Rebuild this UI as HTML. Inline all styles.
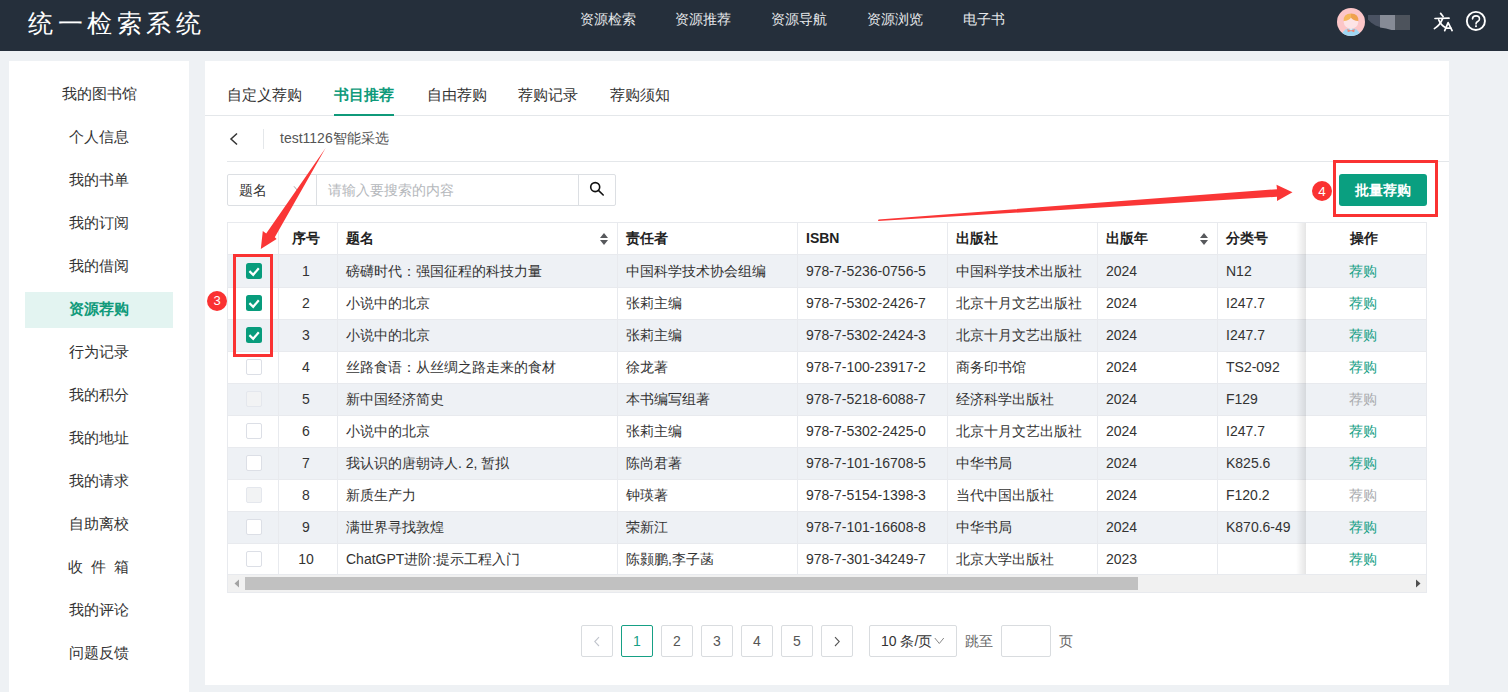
<!DOCTYPE html>
<html><head><meta charset="utf-8">
<style>
*{margin:0;padding:0;box-sizing:border-box}
html,body{width:1508px;height:692px;overflow:hidden;background:#eef1f4;font-family:"Liberation Sans",sans-serif;color:#333}
.abs{position:absolute}
#hdr{position:absolute;left:0;top:0;width:1508px;height:51px;background:#252f3b}
#title{position:absolute;left:28px;top:8px;font-size:25px;letter-spacing:4.6px;color:#fff;font-weight:500;line-height:30px;white-space:nowrap}
.nav{position:absolute;top:11px;font-size:14px;color:#e6e8ea;line-height:16px;white-space:nowrap}
#side{position:absolute;left:9px;top:61px;width:180px;height:640px;background:#fff}
.si{position:absolute;left:0;width:180px;text-align:center;font-size:15px;line-height:20px;color:#333;white-space:nowrap}
#sact{position:absolute;left:16px;top:231px;width:148px;height:36px;background:#e3f4f1}
#main{position:absolute;left:205px;top:61px;width:1244px;height:624px;background:#fff}
.tab{position:absolute;top:24px;font-size:15px;line-height:20px;color:#333;white-space:nowrap}
.line{position:absolute;height:1px;background:#e4e7ea}
.hl{height:1px;background:#e8eaee}
.vl{width:1px;background:#e8eaee}
.th{font-size:14px;line-height:16px;font-weight:bold;color:#222;white-space:nowrap}
.td{font-size:14px;line-height:16px;color:#333;white-space:nowrap}
.pg{position:absolute;top:625px;width:32px;height:32px;border:1px solid #d9dcdf;border-radius:2px;background:#fff;font-size:14px;line-height:30px;text-align:center;color:#555}
</style></head><body>
<div id="hdr">
  <div id="title">统一检索系统</div>
  <div class="nav" style="left:580px">资源检索</div>
  <div class="nav" style="left:675px">资源推荐</div>
  <div class="nav" style="left:771px">资源导航</div>
  <div class="nav" style="left:867px">资源浏览</div>
  <div class="nav" style="left:963px">电子书</div>
  <!-- avatar -->
  <svg class="abs" style="left:1337px;top:8px" width="28" height="28" viewBox="0 0 28 28">
    <defs><clipPath id="cc"><circle cx="14" cy="14" r="14"/></clipPath></defs>
    <circle cx="14" cy="14" r="14" fill="#fcc6c8"/>
    <g clip-path="url(#cc)">
      <path d="M4.5 28 Q5.5 22 11 20.5 H17 Q22.5 22 23.5 28Z" fill="#9fd7f3"/>
      <path d="M12.5 20.5 H15.5 L14 22Z" fill="#fff"/>
      <path d="M10.2 21 L14 22.6 L17.8 21 L17.2 24.2 L14 23 L10.8 24.2Z" fill="#f38472"/>
      <ellipse cx="14" cy="14.2" rx="7.2" ry="6.4" fill="#fde4e6"/>
      <path d="M6.6 13 Q6.2 5.6 14 5.4 L14 9.8 Q12 12.8 6.6 13Z" fill="#f5b75c"/>
      <path d="M21.4 13 Q21.8 5.6 14 5.4 L14 9.8 Q16 12.8 21.4 13Z" fill="#efa24f"/>
    </g>
  </svg>
  <svg class="abs" style="left:0;top:0" width="1508" height="51" viewBox="0 0 1508 51">
    <path d="M1368 15 H1380 V27 L1375.5 25.5 L1371 22.5 L1368 19.5Z" fill="#4a5262"/>
    <path d="M1380 15 H1395 V30 H1391.5 L1386 28.5 L1380 27.5Z" fill="#868b96"/>
    <rect x="1395" y="15" width="15" height="15" fill="#4d535c"/>
  </svg>
  <!-- translate icon -->
  <svg class="abs" style="left:1420px;top:0" width="40" height="40" viewBox="1420 0 40 40">
    <g stroke="#fff" stroke-width="1.7" fill="none" stroke-linecap="round" stroke-linejoin="round">
      <path d="M1440.6 13.4L1443.1 16.5"/><path d="M1435 18.5L1449 18.2"/>
      <path d="M1442.6 18.6Q1440.2 25 1434.4 28.6"/><path d="M1438.7 19.9Q1441.2 25.6 1445.4 27.6"/>
      <path d="M1444.7 30.6L1448.1 22.6L1452.1 30.6"/><path d="M1446 28.1H1450.8"/>
    </g>
  </svg>
  <!-- help icon -->
  <svg class="abs" style="left:1465px;top:10px" width="22" height="22" viewBox="0 0 22 22">
    <circle cx="10.9" cy="10.9" r="9.05" stroke="#fff" stroke-width="1.9" fill="none"/>
    <path d="M7.5 8.9Q7.6 5.9 11 5.9Q14.5 5.9 14.5 8.9Q14.5 10.5 12.7 11.5Q11 12.4 11 13.9" stroke="#fff" stroke-width="1.6" fill="none" stroke-linecap="round"/>
    <rect x="10.1" y="15.3" width="1.8" height="1.8" fill="#fff"/>
  </svg>
</div>

<div id="side">
  <div id="sact"></div>
  <div class="si" style="top:23px">我的图书馆</div>
  <div class="si" style="top:66px">个人信息</div>
  <div class="si" style="top:109px">我的书单</div>
  <div class="si" style="top:152px">我的订阅</div>
  <div class="si" style="top:195px">我的借阅</div>
  <div class="si" style="top:238px;color:#0f9a7a;font-weight:bold">资源荐购</div>
  <div class="si" style="top:281px">行为记录</div>
  <div class="si" style="top:324px">我的积分</div>
  <div class="si" style="top:367px">我的地址</div>
  <div class="si" style="top:410px">我的请求</div>
  <div class="si" style="top:453px">自助离校</div>
  <div class="si" style="top:496px;left:59px;width:15px">收</div><div class="si" style="top:496px;left:81.5px;width:15px">件</div><div class="si" style="top:496px;left:104.5px;width:15px">箱</div>
  <div class="si" style="top:539px">我的评论</div>
  <div class="si" style="top:582px">问题反馈</div>
</div>

<div id="main">
  <div class="tab" style="left:22px">自定义荐购</div>
  <div class="tab" style="left:129px;color:#0f9a7a;font-weight:bold">书目推荐</div>
  <div class="tab" style="left:222px">自由荐购</div>
  <div class="tab" style="left:313px">荐购记录</div>
  <div class="tab" style="left:405px">荐购须知</div>
  <div class="line" style="left:0;top:54px;width:1244px"></div>
  <div class="abs" style="left:129px;top:53px;width:60px;height:2px;background:#0f9a7a"></div>
  <!-- breadcrumb -->
  <svg class="abs" style="left:23px;top:71px" width="12" height="14" viewBox="0 0 12 14"><path d="M9 1.5L3 7L9 12.5" stroke="#333" stroke-width="1.5" fill="none"/></svg>
  <div class="abs" style="left:58px;top:68px;width:1px;height:20px;background:#e4e7ea"></div>
  <div class="abs" style="left:75px;top:69px;font-size:14px;line-height:16px;color:#555;white-space:nowrap">test1126智能采选</div>
  <div class="line" style="left:22px;top:100px;width:1222px"></div>
  <!-- search -->
  <div class="abs" style="left:22px;top:113px;width:389px;height:32px;border:1px solid #dcdfe3;border-radius:2px"></div>
  <div class="abs" style="left:111px;top:114px;width:1px;height:30px;background:#dcdfe3"></div>
  <div class="abs" style="left:373px;top:114px;width:1px;height:30px;background:#dcdfe3"></div>
  <div class="abs" style="left:34px;top:121px;font-size:14px;line-height:16px;color:#333">题名</div>
  <svg class="abs" style="left:88px;top:124px" width="9" height="7" viewBox="0 0 9 7"><path d="M1 1.3L4.5 5.5L8 1.3" stroke="#aaa" stroke-width="1" fill="none"/></svg>
  <div class="abs" style="left:123px;top:121px;font-size:14px;line-height:16px;color:#b5b8bc;white-space:nowrap">请输入要搜索的内容</div>
  <svg class="abs" style="left:384px;top:120px" width="17" height="17" viewBox="0 0 17 17"><circle cx="6.2" cy="6.1" r="4.5" stroke="#111" stroke-width="1.6" fill="none"/><path d="M9.4 9.4L14.2 14" stroke="#111" stroke-width="1.6" stroke-linecap="round"/></svg>
  <!-- batch button -->
  <div class="abs" style="left:1134px;top:113px;width:88px;height:32px;background:#0a9f80;border-radius:3px;color:#fff;font-size:14px;font-weight:bold;line-height:32px;text-align:center">批量荐购</div>
</div>

<div class="abs" style="left:227px;top:222px;width:1200px;height:371px;border:1px solid #e8eaee;background:#fff"></div>
<div class="abs" style="left:228px;top:255px;width:1198px;height:32px;background:#eef1f5"></div>
<div class="abs hl" style="left:228px;top:287px;width:1198px"></div>
<div class="abs" style="left:228px;top:288px;width:1198px;height:31px;background:#fff"></div>
<div class="abs hl" style="left:228px;top:319px;width:1198px"></div>
<div class="abs" style="left:228px;top:320px;width:1198px;height:31px;background:#eef1f5"></div>
<div class="abs hl" style="left:228px;top:351px;width:1198px"></div>
<div class="abs" style="left:228px;top:352px;width:1198px;height:31px;background:#fff"></div>
<div class="abs hl" style="left:228px;top:383px;width:1198px"></div>
<div class="abs" style="left:228px;top:384px;width:1198px;height:31px;background:#eef1f5"></div>
<div class="abs hl" style="left:228px;top:415px;width:1198px"></div>
<div class="abs" style="left:228px;top:416px;width:1198px;height:31px;background:#fff"></div>
<div class="abs hl" style="left:228px;top:447px;width:1198px"></div>
<div class="abs" style="left:228px;top:448px;width:1198px;height:31px;background:#eef1f5"></div>
<div class="abs hl" style="left:228px;top:479px;width:1198px"></div>
<div class="abs" style="left:228px;top:480px;width:1198px;height:31px;background:#fff"></div>
<div class="abs hl" style="left:228px;top:511px;width:1198px"></div>
<div class="abs" style="left:228px;top:512px;width:1198px;height:31px;background:#eef1f5"></div>
<div class="abs hl" style="left:228px;top:543px;width:1198px"></div>
<div class="abs" style="left:228px;top:544px;width:1198px;height:31px;background:#fff"></div>
<div class="abs hl" style="left:228px;top:575px;width:1198px"></div>
<div class="abs hl" style="left:228px;top:254px;width:1198px"></div>
<div class="abs vl" style="left:278px;top:223px;height:352px"></div>
<div class="abs vl" style="left:337px;top:223px;height:352px"></div>
<div class="abs vl" style="left:617px;top:223px;height:352px"></div>
<div class="abs vl" style="left:797px;top:223px;height:352px"></div>
<div class="abs vl" style="left:947px;top:223px;height:352px"></div>
<div class="abs vl" style="left:1097px;top:223px;height:352px"></div>
<div class="abs vl" style="left:1217px;top:223px;height:352px"></div>
<div class="abs th" style="left:292px;top:230px">序号</div>
<div class="abs th" style="left:346px;top:230px">题名</div>
<div class="abs th" style="left:626px;top:230px">责任者</div>
<div class="abs th" style="left:806px;top:230px">ISBN</div>
<div class="abs th" style="left:956px;top:230px">出版社</div>
<div class="abs th" style="left:1106px;top:230px">出版年</div>
<div class="abs th" style="left:1226px;top:230px">分类号</div>
<svg class="abs" style="left:600px;top:233px" width="8" height="12" viewBox="0 0 8 12"><path d="M4 0L8 5H0Z M0 7H8L4 12Z" fill="#57595c"/></svg>
<svg class="abs" style="left:1200px;top:233px" width="8" height="12" viewBox="0 0 8 12"><path d="M4 0L8 5H0Z M0 7H8L4 12Z" fill="#57595c"/></svg>
<div class="abs td" style="left:277px;width:58px;text-align:center;top:263px">1</div>
<div class="abs td" style="left:346px;top:263px">磅礴时代：强国征程的科技力量</div>
<div class="abs td" style="left:626px;top:263px">中国科学技术协会组编</div>
<div class="abs td" style="left:806px;top:263px">978-7-5236-0756-5</div>
<div class="abs td" style="left:956px;top:263px">中国科学技术出版社</div>
<div class="abs td" style="left:1106px;top:263px">2024</div>
<div class="abs td" style="left:1226px;top:263px">N12</div>
<svg class="abs" style="left:246px;top:263px" width="16" height="16" viewBox="0 0 16 16"><rect x="0" y="0" width="16" height="16" rx="2.5" fill="#089c7c"/><path d="M3.4 8.1L7.2 11.8L12.8 5.3" stroke="#fff" stroke-width="2.2" fill="none"/></svg>
<div class="abs td" style="left:277px;width:58px;text-align:center;top:295px">2</div>
<div class="abs td" style="left:346px;top:295px">小说中的北京</div>
<div class="abs td" style="left:626px;top:295px">张莉主编</div>
<div class="abs td" style="left:806px;top:295px">978-7-5302-2426-7</div>
<div class="abs td" style="left:956px;top:295px">北京十月文艺出版社</div>
<div class="abs td" style="left:1106px;top:295px">2024</div>
<div class="abs td" style="left:1226px;top:295px">I247.7</div>
<svg class="abs" style="left:246px;top:295px" width="16" height="16" viewBox="0 0 16 16"><rect x="0" y="0" width="16" height="16" rx="2.5" fill="#089c7c"/><path d="M3.4 8.1L7.2 11.8L12.8 5.3" stroke="#fff" stroke-width="2.2" fill="none"/></svg>
<div class="abs td" style="left:277px;width:58px;text-align:center;top:327px">3</div>
<div class="abs td" style="left:346px;top:327px">小说中的北京</div>
<div class="abs td" style="left:626px;top:327px">张莉主编</div>
<div class="abs td" style="left:806px;top:327px">978-7-5302-2424-3</div>
<div class="abs td" style="left:956px;top:327px">北京十月文艺出版社</div>
<div class="abs td" style="left:1106px;top:327px">2024</div>
<div class="abs td" style="left:1226px;top:327px">I247.7</div>
<svg class="abs" style="left:246px;top:327px" width="16" height="16" viewBox="0 0 16 16"><rect x="0" y="0" width="16" height="16" rx="2.5" fill="#089c7c"/><path d="M3.4 8.1L7.2 11.8L12.8 5.3" stroke="#fff" stroke-width="2.2" fill="none"/></svg>
<div class="abs td" style="left:277px;width:58px;text-align:center;top:359px">4</div>
<div class="abs td" style="left:346px;top:359px">丝路食语：从丝绸之路走来的食材</div>
<div class="abs td" style="left:626px;top:359px">徐龙著</div>
<div class="abs td" style="left:806px;top:359px">978-7-100-23917-2</div>
<div class="abs td" style="left:956px;top:359px">商务印书馆</div>
<div class="abs td" style="left:1106px;top:359px">2024</div>
<div class="abs td" style="left:1226px;top:359px">TS2-092</div>
<div class="abs" style="left:246px;top:359px;width:16px;height:16px;border:1px solid #dcdfe6;border-radius:2px;background:#fff"></div>
<div class="abs td" style="left:277px;width:58px;text-align:center;top:391px">5</div>
<div class="abs td" style="left:346px;top:391px">新中国经济简史</div>
<div class="abs td" style="left:626px;top:391px">本书编写组著</div>
<div class="abs td" style="left:806px;top:391px">978-7-5218-6088-7</div>
<div class="abs td" style="left:956px;top:391px">经济科学出版社</div>
<div class="abs td" style="left:1106px;top:391px">2024</div>
<div class="abs td" style="left:1226px;top:391px">F129</div>
<div class="abs" style="left:246px;top:391px;width:16px;height:16px;border:1px solid #e4e7ed;border-radius:2px;background:#f2f3f4"></div>
<div class="abs td" style="left:277px;width:58px;text-align:center;top:423px">6</div>
<div class="abs td" style="left:346px;top:423px">小说中的北京</div>
<div class="abs td" style="left:626px;top:423px">张莉主编</div>
<div class="abs td" style="left:806px;top:423px">978-7-5302-2425-0</div>
<div class="abs td" style="left:956px;top:423px">北京十月文艺出版社</div>
<div class="abs td" style="left:1106px;top:423px">2024</div>
<div class="abs td" style="left:1226px;top:423px">I247.7</div>
<div class="abs" style="left:246px;top:423px;width:16px;height:16px;border:1px solid #dcdfe6;border-radius:2px;background:#fff"></div>
<div class="abs td" style="left:277px;width:58px;text-align:center;top:455px">7</div>
<div class="abs td" style="left:346px;top:455px">我认识的唐朝诗人. 2, 暂拟</div>
<div class="abs td" style="left:626px;top:455px">陈尚君著</div>
<div class="abs td" style="left:806px;top:455px">978-7-101-16708-5</div>
<div class="abs td" style="left:956px;top:455px">中华书局</div>
<div class="abs td" style="left:1106px;top:455px">2024</div>
<div class="abs td" style="left:1226px;top:455px">K825.6</div>
<div class="abs" style="left:246px;top:455px;width:16px;height:16px;border:1px solid #dcdfe6;border-radius:2px;background:#fff"></div>
<div class="abs td" style="left:277px;width:58px;text-align:center;top:487px">8</div>
<div class="abs td" style="left:346px;top:487px">新质生产力</div>
<div class="abs td" style="left:626px;top:487px">钟瑛著</div>
<div class="abs td" style="left:806px;top:487px">978-7-5154-1398-3</div>
<div class="abs td" style="left:956px;top:487px">当代中国出版社</div>
<div class="abs td" style="left:1106px;top:487px">2024</div>
<div class="abs td" style="left:1226px;top:487px">F120.2</div>
<div class="abs" style="left:246px;top:487px;width:16px;height:16px;border:1px solid #e4e7ed;border-radius:2px;background:#f2f3f4"></div>
<div class="abs td" style="left:277px;width:58px;text-align:center;top:519px">9</div>
<div class="abs td" style="left:346px;top:519px">满世界寻找敦煌</div>
<div class="abs td" style="left:626px;top:519px">荣新江</div>
<div class="abs td" style="left:806px;top:519px">978-7-101-16608-8</div>
<div class="abs td" style="left:956px;top:519px">中华书局</div>
<div class="abs td" style="left:1106px;top:519px">2024</div>
<div class="abs td" style="left:1226px;top:519px">K870.6-49</div>
<div class="abs" style="left:246px;top:519px;width:16px;height:16px;border:1px solid #dcdfe6;border-radius:2px;background:#fff"></div>
<div class="abs td" style="left:277px;width:58px;text-align:center;top:551px">10</div>
<div class="abs td" style="left:346px;top:551px">ChatGPT进阶:提示工程入门</div>
<div class="abs td" style="left:626px;top:551px">陈颢鹏,李子菡</div>
<div class="abs td" style="left:806px;top:551px">978-7-301-34249-7</div>
<div class="abs td" style="left:956px;top:551px">北京大学出版社</div>
<div class="abs td" style="left:1106px;top:551px">2023</div>
<div class="abs td" style="left:1226px;top:551px"></div>
<div class="abs" style="left:246px;top:551px;width:16px;height:16px;border:1px solid #dcdfe6;border-radius:2px;background:#fff"></div>
<div class="abs" style="left:1296px;top:223px;width:10px;height:352px;background:linear-gradient(to right,rgba(0,0,0,0),rgba(0,0,0,0.10))"></div>
<div class="abs" style="left:1306px;top:223px;width:120px;height:31px;background:#fff"></div>
<div class="abs th" style="left:1306px;width:115px;text-align:center;top:230px">操作</div>
<div class="abs" style="left:1306px;top:255px;width:120px;height:32px;background:#eef1f5"></div>
<div class="abs td" style="left:1306px;width:114px;text-align:center;top:263px;color:#16a085">荐购</div>
<div class="abs" style="left:1306px;top:288px;width:120px;height:31px;background:#fff"></div>
<div class="abs td" style="left:1306px;width:114px;text-align:center;top:295px;color:#16a085">荐购</div>
<div class="abs" style="left:1306px;top:320px;width:120px;height:31px;background:#eef1f5"></div>
<div class="abs td" style="left:1306px;width:114px;text-align:center;top:327px;color:#16a085">荐购</div>
<div class="abs" style="left:1306px;top:352px;width:120px;height:31px;background:#fff"></div>
<div class="abs td" style="left:1306px;width:114px;text-align:center;top:359px;color:#16a085">荐购</div>
<div class="abs" style="left:1306px;top:384px;width:120px;height:31px;background:#eef1f5"></div>
<div class="abs td" style="left:1306px;width:114px;text-align:center;top:391px;color:#a9abae">荐购</div>
<div class="abs" style="left:1306px;top:416px;width:120px;height:31px;background:#fff"></div>
<div class="abs td" style="left:1306px;width:114px;text-align:center;top:423px;color:#16a085">荐购</div>
<div class="abs" style="left:1306px;top:448px;width:120px;height:31px;background:#eef1f5"></div>
<div class="abs td" style="left:1306px;width:114px;text-align:center;top:455px;color:#16a085">荐购</div>
<div class="abs" style="left:1306px;top:480px;width:120px;height:31px;background:#fff"></div>
<div class="abs td" style="left:1306px;width:114px;text-align:center;top:487px;color:#a9abae">荐购</div>
<div class="abs" style="left:1306px;top:512px;width:120px;height:31px;background:#eef1f5"></div>
<div class="abs td" style="left:1306px;width:114px;text-align:center;top:519px;color:#16a085">荐购</div>
<div class="abs" style="left:1306px;top:544px;width:120px;height:31px;background:#fff"></div>
<div class="abs td" style="left:1306px;width:114px;text-align:center;top:551px;color:#16a085">荐购</div>
<div class="abs" style="left:228px;top:575px;width:1198px;height:17px;background:#f1f1f1"></div>
<div class="abs hl" style="left:228px;top:574px;width:1198px"></div>
<div class="abs" style="left:245px;top:577px;width:893px;height:13px;background:#c1c1c1"></div>
<svg class="abs" style="left:232.5px;top:579px" width="8" height="9" viewBox="0 0 8 9"><path d="M6 0.5V8.5L1.5 4.5Z" fill="#a3a3a3"/></svg>
<svg class="abs" style="left:1414px;top:579px" width="8" height="9" viewBox="0 0 8 9"><path d="M2 0.5V8.5L6.5 4.5Z" fill="#505050"/></svg>

<!-- pagination -->
<div class="pg" style="left:581px;color:#c0c4cc"><svg width="10" height="12" viewBox="0 0 10 12" style="margin-top:10px"><path d="M7 1.2L2.8 5.6L7 10" stroke="#c0c4cc" stroke-width="1.1" fill="none"/></svg></div>
<div class="pg" style="left:621px;border-color:#16a085;color:#16a085">1</div>
<div class="pg" style="left:661px">2</div>
<div class="pg" style="left:701px">3</div>
<div class="pg" style="left:741px">4</div>
<div class="pg" style="left:781px">5</div>
<div class="pg" style="left:821px"><svg width="10" height="12" viewBox="0 0 10 12" style="margin-top:10px"><path d="M3 1.2L7.2 5.6L3 10" stroke="#555" stroke-width="1.1" fill="none"/></svg></div>
<div class="abs" style="left:869px;top:625px;width:88px;height:32px;border:1px solid #d9dcdf;border-radius:2px;background:#fff"></div>
<div class="abs" style="left:881px;top:633px;font-size:14px;line-height:16px;color:#333;white-space:nowrap">10 条/页</div>
<svg class="abs" style="left:934px;top:637px" width="11" height="8" viewBox="0 0 11 8"><path d="M0.8 1L5.3 6.5L9.8 1" stroke="#888" stroke-width="1" fill="none"/></svg>
<div class="abs" style="left:965px;top:633px;font-size:14px;line-height:16px;color:#666;white-space:nowrap">跳至</div>
<div class="abs" style="left:1001px;top:625px;width:50px;height:32px;border:1px solid #d9dcdf;border-radius:2px;background:#fff"></div>
<div class="abs" style="left:1059px;top:633px;font-size:14px;line-height:16px;color:#666;white-space:nowrap">页</div>

<!-- annotations -->
<svg class="abs" style="left:0;top:0" width="1508" height="692" viewBox="0 0 1508 692">
  <!-- red box around button -->
  <rect x="1334.5" y="161.5" width="102" height="54" stroke="#fa3232" stroke-width="3" fill="none"/>
  <!-- red box around checkboxes -->
  <rect x="234.5" y="255.5" width="37" height="100" stroke="#fa3232" stroke-width="3" fill="none"/>
  <!-- circle 4 -->
  <circle cx="1322" cy="191" r="10" fill="#fa3232"/>
  <text x="1322" y="195.5" font-size="13.5" fill="#fff" text-anchor="middle" font-family="Liberation Sans">4</text>
  <!-- circle 3 -->
  <circle cx="217" cy="301" r="10" fill="#fa3232"/>
  <text x="217" y="305" font-size="13" fill="#fff" text-anchor="middle" font-family="Liberation Sans">3</text>
  <!-- long arrow -->
  <path d="M878 221 L878.5 219.6 L1277 189.2 L1276.5 184.8 L1292.5 192.2 L1277 201 L1277 196.8 Z" fill="#fa3636"/>
  <!-- diagonal arrow -->
  <path d="M325.6 148 L274.8 237.2 L276.6 239.1 L260.8 248.9 L262.8 231 L266.2 233.6 Z" fill="#fa3636"/>
</svg>
</body></html>
